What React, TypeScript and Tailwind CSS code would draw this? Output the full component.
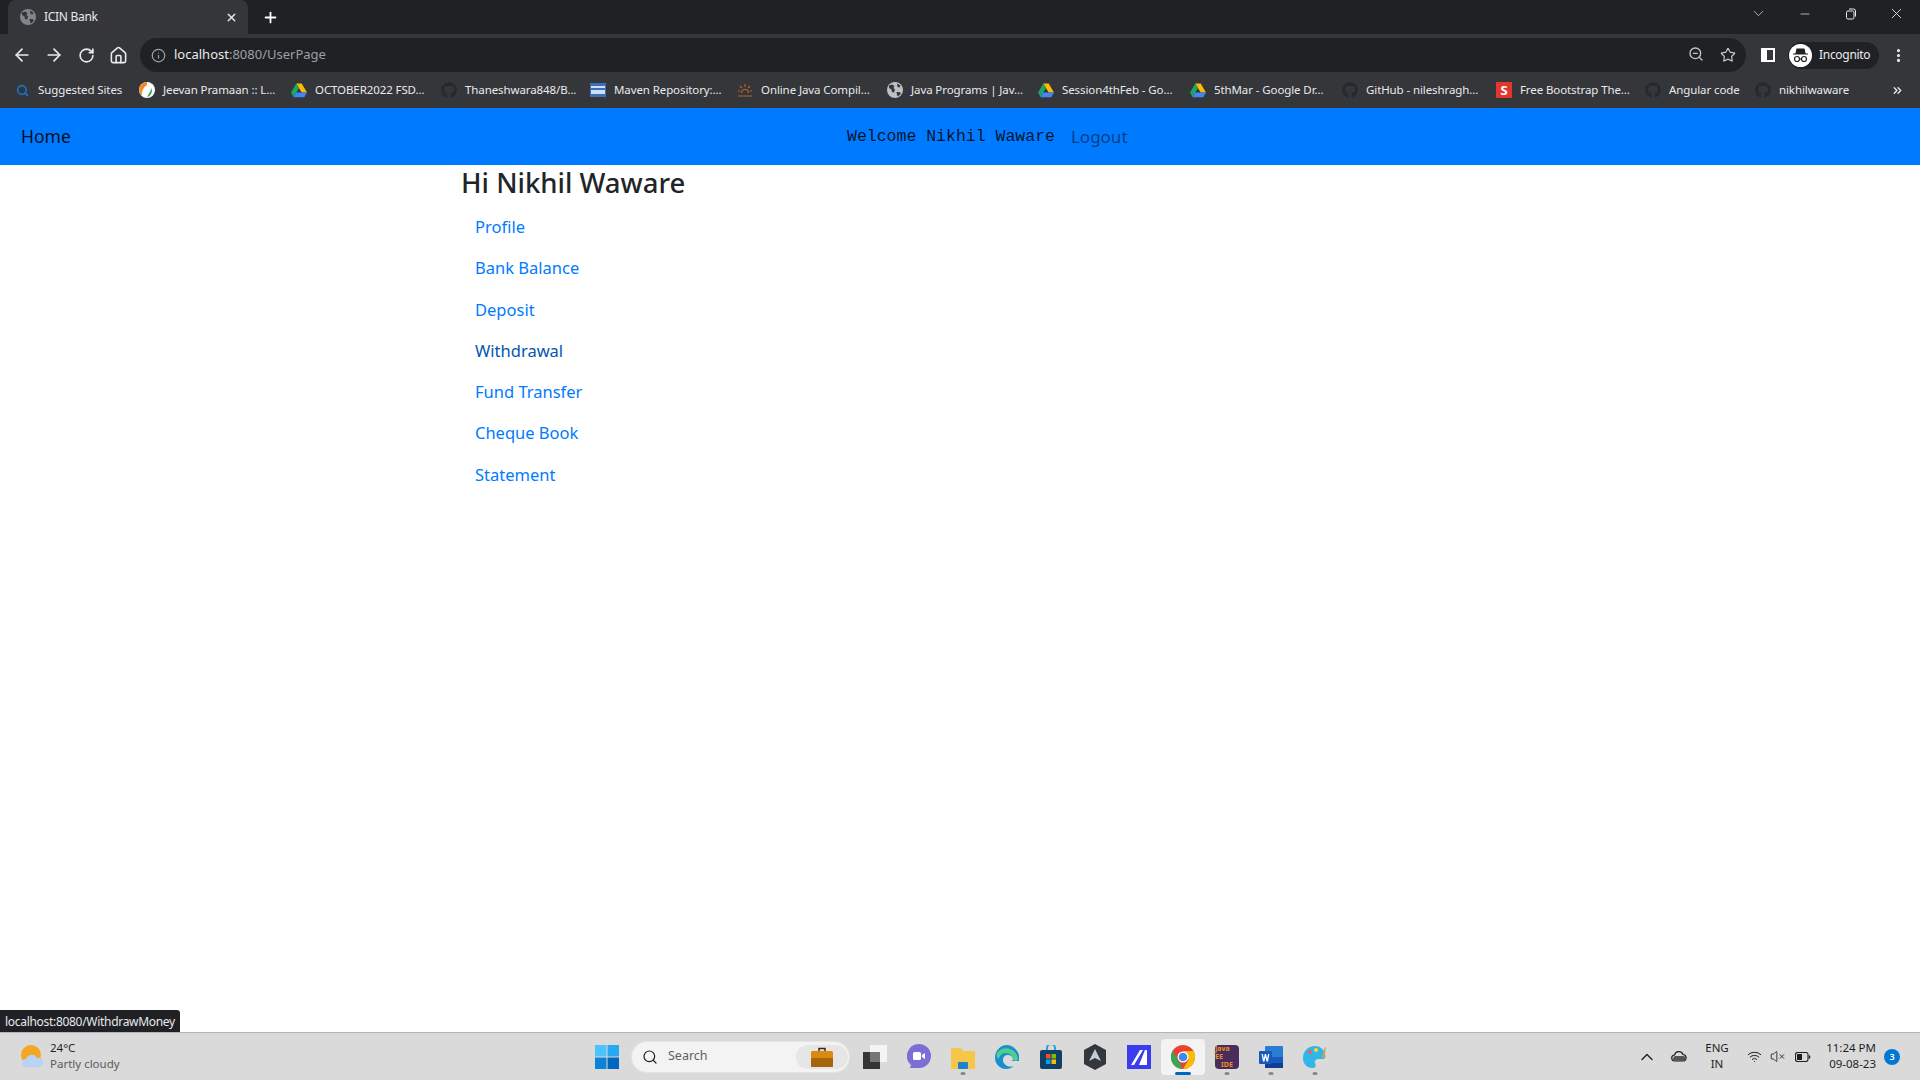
import { ArrowLeft, ArrowRight, RotateCw, Home, Info, Search, ZoomOut, Star, X, Plus, Minus, ChevronDown, ChevronUp, MoreVertical, ChevronsRight, Wifi, VolumeX } from "lucide-react";
import { FaGithub } from "react-icons/fa";

const DriveIcon = () => (
  <svg width="16" height="15" viewBox="0 0 16 15">
    <path d="M5.3 0.5h5.4L16 9.5h-5.3z" fill="#fbbc04" />
    <path d="M5.3 0.5L0 9.5l2.7 4.8L8 5z" fill="#1fa463" />
    <path d="M2.7 14.3h10.6L16 9.5H5.3z" fill="#4285f4" />
  </svg>
);

// chrome's default favicon, a filled globe
const GlobeIcon = ({ fill = "#bdc1c6" }: { fill?: string }) => (
  <svg width="16" height="16" viewBox="0 0 16 16">
    <circle cx="8" cy="8" r="8" fill={fill} />
    <path d="M2 3.500L5 2.500 7.500 4 6.500 6 8 7.500 7 10.500 5 10 4.500 7.500 2 6zM9.500 10h3l1.500 1.500-3 3-1-1.500zM10 1.500l3.500 2-1 2-2-.5z" fill="#35363a" />
  </svg>
);
const GithubIcon = () => <FaGithub size={16} className="text-[#24292e]" />;

const bookmarks = [
  { label: "Suggested Sites", w: "w-[125px]", icon: <Search size={13} strokeWidth={3} className="text-[#1a73c8]" /> },
  {
    label: "Jeevan Pramaan :: L...",
    w: "w-[152px]",
    icon: (
      <svg width="16" height="16" viewBox="0 0 16 16">
        <circle cx="8" cy="8" r="8" fill="#fff" />
        <path d="M8 0a8 8 0 0 0-5 14C2 9 5 5 8 3z" fill="#f08a1d" />
        <path d="M8 15a6 6 0 0 0 4-9c0 3-2 5-4 9z" fill="#3aa54a" />
      </svg>
    ),
  },
  { label: "OCTOBER2022 FSD...", w: "w-[150px]", icon: <DriveIcon /> },
  { label: "Thaneshwara848/B...", w: "w-[149px]", icon: <GithubIcon /> },
  {
    label: "Maven Repository:...",
    w: "w-[147px]",
    icon: (
      <svg width="16" height="14" viewBox="0 0 16 14">
        <rect width="16" height="14" fill="#3d6fb4" />
        <rect x="1" y="3" width="14" height="2" fill="#cfe0f5" />
        <rect x="1" y="7" width="14" height="4" fill="#cfe0f5" />
      </svg>
    ),
  },
  {
    label: "Online Java Compil...",
    w: "w-[150px]",
    icon: (
      <svg width="16" height="16" viewBox="0 0 16 16" fill="none" stroke="#b8632a" strokeWidth="1.2">
        <path d="M1 14h14M4.5 11a3.5 3.5 0 0 1 7 0M8 2v3M3 4l2 2M13 4l-2 2M1 9h2M13 9h2" />
      </svg>
    ),
  },
  { label: "Java Programs | Jav...", w: "w-[151px]", icon: <GlobeIcon /> },
  { label: "Session4thFeb - Go...", w: "w-[152px]", icon: <DriveIcon /> },
  { label: "5thMar - Google Dr...", w: "w-[152px]", icon: <DriveIcon /> },
  { label: "GitHub - nileshragh...", w: "w-[154px]", icon: <GithubIcon /> },
  {
    label: "Free Bootstrap The...",
    w: "w-[149px]",
    icon: <span className="flex h-4 w-4 items-center justify-center bg-[#e0392b] text-[13px] font-bold leading-none text-white">S</span>,
  },
  { label: "Angular code", w: "w-[110px]", icon: <GithubIcon /> },
  { label: "nikhilwaware", w: "w-[120px]", icon: <GithubIcon /> },
];

const links = ["Profile", "Bank Balance", "Deposit", "Withdrawal", "Fund Transfer", "Cheque Book", "Statement"];

const TaskIcon = ({ children, dot, active }: { children: React.ReactNode; dot?: boolean; active?: boolean }) => (
  <div className={`relative flex h-[36px] w-[44px] shrink-0 items-center justify-center rounded ${active ? "bg-[#f3f3f3]" : ""}`}>
    {children}
    {dot && <span className="absolute bottom-0 left-1/2 h-[3px] w-[5px] -translate-x-1/2 rounded-full bg-[#8a8a8a]" />}
    {active && <span className="absolute bottom-0 left-1/2 h-[3px] w-[16px] -translate-x-1/2 rounded-full bg-[#0067c0]" />}
  </div>
);

export default function App() {
  return (
    <div className="flex h-screen w-full flex-col overflow-hidden bg-white font-['Noto_Sans',sans-serif]">
      {/* tab strip */}
      <div className="flex h-[34px] shrink-0 items-center bg-[#202124] pl-2 text-white">
        <div className="flex h-[34px] w-[240px] items-center rounded-t-lg bg-[#35363a] pl-[12px] pr-[10px]">
          <GlobeIcon fill="#80868b" />
          <span className="ml-[8px] flex-1 text-[12px] tracking-[-0.3px] text-[#e8eaed]">ICIN Bank</span>
          <X size={13} strokeWidth={2.5} className="text-[#e8eaed]" />
        </div>
        <Plus size={17} strokeWidth={2.5} className="ml-[14px] text-white" />
        <ChevronDown size={17} strokeWidth={1.2} className="ml-auto mb-[7px] text-[#c4c7c5]" />
        <Minus size={14} strokeWidth={1.2} className="ml-[31px] mb-[7px] text-[#e8eaed]" />
        <svg width="12" height="12" viewBox="0 0 12 12" fill="none" stroke="#e8eaed" className="ml-[33px] mb-[7px]">
          <rect x="1.5" y="3" width="7.5" height="8" rx="1.5" />
          <path d="M4 1h4.5A2 2 0 0 1 10.5 3v5.5" />
        </svg>
        <X size={17} strokeWidth={1.2} className="ml-[31px] mr-[15px] mb-[7px] text-[#e8eaed]" />
      </div>

      {/* toolbar */}
      <div className="flex h-[38px] shrink-0 items-end bg-[#35363a] text-[#e8eaed]">
        <div className="flex h-[34px] w-[140px] shrink-0 items-center pl-[12px]">
          <ArrowLeft size={20} strokeWidth={2} />
          <ArrowRight size={20} strokeWidth={2} className="ml-[12px]" />
          <RotateCw size={17} strokeWidth={2.3} className="ml-[14px]" />
          <Home size={19} strokeWidth={2} className="ml-[14px]" />
        </div>
        <div className="flex h-[34px] w-[1606px] shrink-0 items-center rounded-full bg-[#202124] pl-[11px] pr-[10px]">
          <Info size={15} className="text-[#9aa0a6]" />
          <span className="ml-[8px] text-[13px]">
            localhost<span className="text-[#9aa0a6]">:8080/UserPage</span>
          </span>
          <ZoomOut size={16} className="ml-auto -translate-y-px text-[#c4c7c5]" />
          <Star size={16} strokeWidth={1.8} className="ml-[16px] text-[#c4c7c5]" />
        </div>
        <div className="flex h-[34px] flex-1 items-center pl-[15px]">
          <span className="flex h-[14px] w-[14px] justify-end border-[2.5px] border-white bg-white">
            <span className="h-full w-[6px] bg-[#35363a]" />
          </span>
          <div className="ml-[13px] flex h-[27px] w-[91px] items-center rounded-full bg-[#202124] pl-[1px]">
            <span className="flex h-[23px] w-[23px] items-center justify-center rounded-full bg-white">
              <svg width="17" height="15" viewBox="0 0 17 15" fill="none" stroke="#202124" strokeWidth="1.2">
                <path d="M1 6h15M4 5.5L5 1h7l1 4.5z" fill="#202124" />
                <circle cx="5" cy="11" r="2.5" />
                <circle cx="12" cy="11" r="2.5" />
                <path d="M7.5 11h2" />
              </svg>
            </span>
            <span className="ml-[7px] text-[12px] tracking-[-0.3px]">Incognito</span>
          </div>
          <MoreVertical size={17} strokeWidth={2.5} className="ml-[11px]" />
        </div>
      </div>

      {/* bookmarks bar */}
      <div className="flex h-[36px] shrink-0 items-center bg-[#35363a] pl-[14px] text-[11.5px] tracking-[-0.1px] text-[#e8eaed]">
        {bookmarks.map((b) => (
          <div key={b.label} className={`flex shrink-0 items-center ${b.w}`}>
            <span className="flex w-[16px] shrink-0 justify-center">{b.icon}</span>
            <span className="ml-[8px] whitespace-nowrap">{b.label}</span>
          </div>
        ))}
        <ChevronsRight size={13} strokeWidth={2.5} className="ml-[16px]" />
      </div>

      {/* page */}
      <nav className="flex h-[57px] shrink-0 items-center bg-[#007bff] pl-[21px] text-[17.5px]">
        <a className="w-[826px] text-[#000000e6]">Home</a>
        <span className="pt-[2px] font-['Liberation_Mono',monospace] text-[16.5px] text-[#000000d9]">Welcome Nikhil Waware</span>
        <a className="ml-[16px] text-[17px] text-[#00000080]">Logout</a>
      </nav>

      <main className="relative min-h-0 flex-1">
        <div className="mx-auto w-[998px]">
          <h2 className="text-[27.5px] font-medium leading-[36px] text-[#212529]">Hi Nikhil Waware</h2>
          <ul className="mt-[5px] pl-[14px] text-[16.500px] leading-[41.25px] text-[#007bff]">
            {links.map((l) => (
              <li key={l} className={l === "Withdrawal" ? "text-[#0056b3]" : ""}>
                {l}
              </li>
            ))}
          </ul>
        </div>
        <div className="absolute bottom-0 left-0 flex h-[22px] w-[180px] items-center rounded-tr-[3px] bg-[#202124] pl-[5px] pt-[1px] text-[12px] tracking-[-0.3px] text-[#e8eaed]">
          localhost:8080/WithdrawMoney
        </div>
      </main>

      {/* windows taskbar */}
      <footer className="flex h-[48px] shrink-0 items-center border-t border-[#b4b4b4] bg-[#dadada]">
        <div className="flex w-[595px] shrink-0 items-center pl-[20px]">
          <svg width="24" height="24" viewBox="0 0 24 24">
            <circle cx="11" cy="10" r="10" fill="#f5a623" />
            <path d="M6 22a4 4 0 0 1 0-8 6 6 0 0 1 11-1 4.500 4.500 0 0 1 3 9z" fill="#b9d4f2" />
          </svg>
          <div className="mb-[2px] ml-[6px] text-[11.5px] leading-[16px]">
            <div className="text-[#1f1f1f]">24°C</div>
            <div className="text-[#5a5a5a]">Partly cloudy</div>
          </div>
        </div>
        <svg width="24" height="24" viewBox="0 0 24 24" className="shrink-0">
          <rect x="0" y="0" width="11.500" height="11.500" fill="#4cc2ff" />
          <rect x="12.500" y="0" width="11.500" height="11.500" fill="#29a8f0" />
          <rect x="0" y="12.500" width="11.500" height="11.500" fill="#0a84d8" />
          <rect x="12.500" y="12.500" width="11.500" height="11.500" fill="#0067c0" />
        </svg>
        <div className="ml-[13px] flex h-[30px] w-[217px] shrink-0 items-center rounded-full bg-[#f3f3f3] pl-[10px] pr-[1px] shadow-[0_0_0_1px_#e4e4e4]">
          <Search size={16} strokeWidth={1.8} className="text-[#1f1f1f]" />
          <span className="ml-[10px] text-[12.5px] text-[#5f5f5f]">Search</span>
          <span className="ml-auto flex h-[24px] w-[52px] items-center justify-center rounded-full bg-[#e6e6e6]">
            <svg width="22" height="20" viewBox="0 0 22 20">
              <path d="M8 4V1.500h6V4" fill="none" stroke="#3b2a10" strokeWidth="1.500" />
              <rect y="4" width="22" height="16" rx="1.500" fill="#d98a12" />
              <rect y="11" width="22" height="9" rx="1" fill="#a8640a" />
            </svg>
          </span>
        </div>
        <div className="ml-[4px] flex shrink-0 items-center">
          <TaskIcon>
            <svg width="24" height="24" viewBox="0 0 24 24">
              <rect x="7" y="0" width="17" height="17" fill="#f4f4f4" />
              <rect x="7" y="7" width="10" height="10" fill="#9a9a9a" />
              <rect x="0" y="7" width="17" height="17" fill="#222" opacity="0.9" />
              <rect x="7" y="7" width="10" height="10" fill="#777" />
            </svg>
          </TaskIcon>
          <TaskIcon>
            <svg width="24" height="26" viewBox="0 0 24 26">
              <path d="M12 0a12 12 0 0 1 0 24H3l1-3A12 12 0 0 1 12 0z" fill="#7b6fd6" />
              <rect x="6" y="8" width="8" height="8" rx="1.500" fill="#fff" />
              <path d="M15 11l3-2v6l-3-2z" fill="#fff" />
            </svg>
          </TaskIcon>
          <TaskIcon dot>
            <svg width="24" height="24" viewBox="0 0 24 24">
              <path d="M0 3h10l2 3h12v18H0z" fill="#f6c64a" />
              <rect x="7" y="17" width="10" height="7" rx="1" fill="#1a83c9" />
            </svg>
          </TaskIcon>
          <TaskIcon>
            <svg width="24" height="24" viewBox="0 0 24 24">
              <path d="M12 0C5 0 0 6 0 13c0 6 5 11 11 11 3 0 6-1 8-3-5 2-11-1-11-6 0-3 2-5 5-5 4 0 5 3 5 4s-1 2-2 2h8c1-1 1-3 0-6C22 4 17 0 12 0z" fill="#1a8fd0" />
              <path d="M2 8C5 3 12 2 17 5c4 2 6 6 6 10-2 1-5 1-5-1 0-3-3-6-7-6-4 0-7 3-7 6-2-1-3-4-2-6z" fill="#4fd08a" />
            </svg>
          </TaskIcon>
          <TaskIcon>
            <svg width="22" height="24" viewBox="0 0 22 24">
              <path d="M7 6V3a4 4 0 0 1 8 0v3" fill="none" stroke="#2aa1e0" strokeWidth="2" />
              <rect y="5" width="22" height="19" rx="2" fill="#123f66" />
              <rect x="6" y="9" width="4.500" height="4.500" fill="#f25022" />
              <rect x="11.500" y="9" width="4.500" height="4.500" fill="#7fba00" />
              <rect x="6" y="14.500" width="4.500" height="4.500" fill="#00a4ef" />
              <rect x="11.500" y="14.500" width="4.500" height="4.500" fill="#ffb900" />
            </svg>
          </TaskIcon>
          <TaskIcon>
            <svg width="22" height="26" viewBox="0 0 22 26">
              <path d="M11 0l11 6v14l-11 6L0 20V6z" fill="#33383f" />
              <path d="M11 5l6 12-6-3-6 3z" fill="#c8ccd2" />
            </svg>
          </TaskIcon>
          <TaskIcon>
            <svg width="24" height="24" viewBox="0 0 24 24">
              <rect width="24" height="24" fill="#3b3bf0" />
              <path d="M4 20L13 5h3L7 20zM12 20l6-15h2v15z" fill="#fff" />
            </svg>
          </TaskIcon>
          <TaskIcon active>
            <svg width="24" height="24" viewBox="0 0 24 24">
              <circle cx="12" cy="12" r="12" fill="#ea4335" />
              <path d="M12 24a12 12 0 0 1-10.400-18L7 15l5 9z" fill="#34a853" />
              <path d="M12 6h10.400A12 12 0 0 1 12 24l5.500-9z" fill="#fbbc04" />
              <circle cx="12" cy="12" r="5.500" fill="#fff" />
              <circle cx="12" cy="12" r="4.300" fill="#4285f4" />
            </svg>
          </TaskIcon>
          <TaskIcon dot>
            <span className="flex h-[24px] w-[24px] flex-col items-center justify-center rounded-sm bg-[#4a2c5a] text-[7px] font-bold leading-[8px] text-[#e8912d]">
              <span>Java EE</span>
              <span>IDE</span>
            </span>
          </TaskIcon>
          <TaskIcon dot>
            <svg width="24" height="24" viewBox="0 0 24 24">
              <rect x="6" y="1" width="18" height="22" rx="1" fill="#2b7cd3" />
              <rect x="6" y="12" width="18" height="6" fill="#185abd" />
              <rect x="6" y="18" width="18" height="5" fill="#103f91" />
              <rect x="0" y="6" width="13" height="13" rx="1" fill="#185abd" />
              <path d="M2.500 9h1.300l1 4.500 1-4.500h1.300l1 4.500 1-4.500h1.300L9 16.500H7.500l-1-4.300-1 4.300H4z" fill="#fff" />
            </svg>
          </TaskIcon>
          <TaskIcon dot>
            <svg width="24" height="24" viewBox="0 0 24 24">
              <path d="M12 1C5 1 0 6 0 13s5 10 10 10c3 0 3-3 2-5s1-4 4-4h4c2 0 3-2 2-5-1-5-5-8-10-8z" fill="#31b6e8" />
              <circle cx="7" cy="7" r="2" fill="#f25f5c" />
              <circle cx="13" cy="5" r="2" fill="#ffd23f" />
              <path d="M19 12l3-10 1 1-2 11z" fill="#d8a24a" />
            </svg>
          </TaskIcon>
        </div>

        <div className="ml-[300px] flex shrink-0 items-center text-[#1f1f1f]">
          <ChevronUp size={20} strokeWidth={1.6} />
          <svg width="16" height="11" viewBox="0 0 16 11" fill="#dadada" stroke="#1f1f1f" strokeWidth="1.200" className="ml-[14px]">
            <path d="M4 10a3 3 0 0 1-.5-6 4.500 4.500 0 0 1 8.500-.5 3.300 3.300 0 0 1 .5 6.500z" />
            <path d="M3 10a3 3 0 0 1 1-5h8a2.500 2.500 0 0 1 0 5z" fill="#555" stroke="none" />
          </svg>
          <div className="mb-[2px] ml-[10px] w-[40px] text-center text-[11.5px] leading-[15.5px]">
            <div>ENG</div>
            <div>IN</div>
          </div>
          <Wifi size={15} strokeWidth={1.6} className="ml-[10px]" />
          <VolumeX size={15} strokeWidth={1.4} className="ml-[8px]" />
          <svg width="16" height="10" viewBox="0 0 16 10" fill="none" stroke="#1f1f1f" strokeWidth="1.100" className="ml-[10px]">
            <rect x="0.500" y="0.500" width="12.500" height="9" rx="2" />
            <rect x="2" y="2" width="5" height="6" fill="#1f1f1f" stroke="none" />
            <path d="M14.500 3.500v3" strokeWidth="1.500" />
          </svg>
          <div className="mb-[2px] ml-[15px] w-[50px] text-right text-[11.5px] leading-[16px]">
            <div className="whitespace-nowrap">11:24 PM</div>
            <div className="whitespace-nowrap">09-08-23</div>
          </div>
          <span className="ml-[8px] flex h-[16px] w-[16px] items-center justify-center rounded-full bg-[#0078d4] text-[9px] font-semibold text-white">3</span>
        </div>
      </footer>
    </div>
  );
}
